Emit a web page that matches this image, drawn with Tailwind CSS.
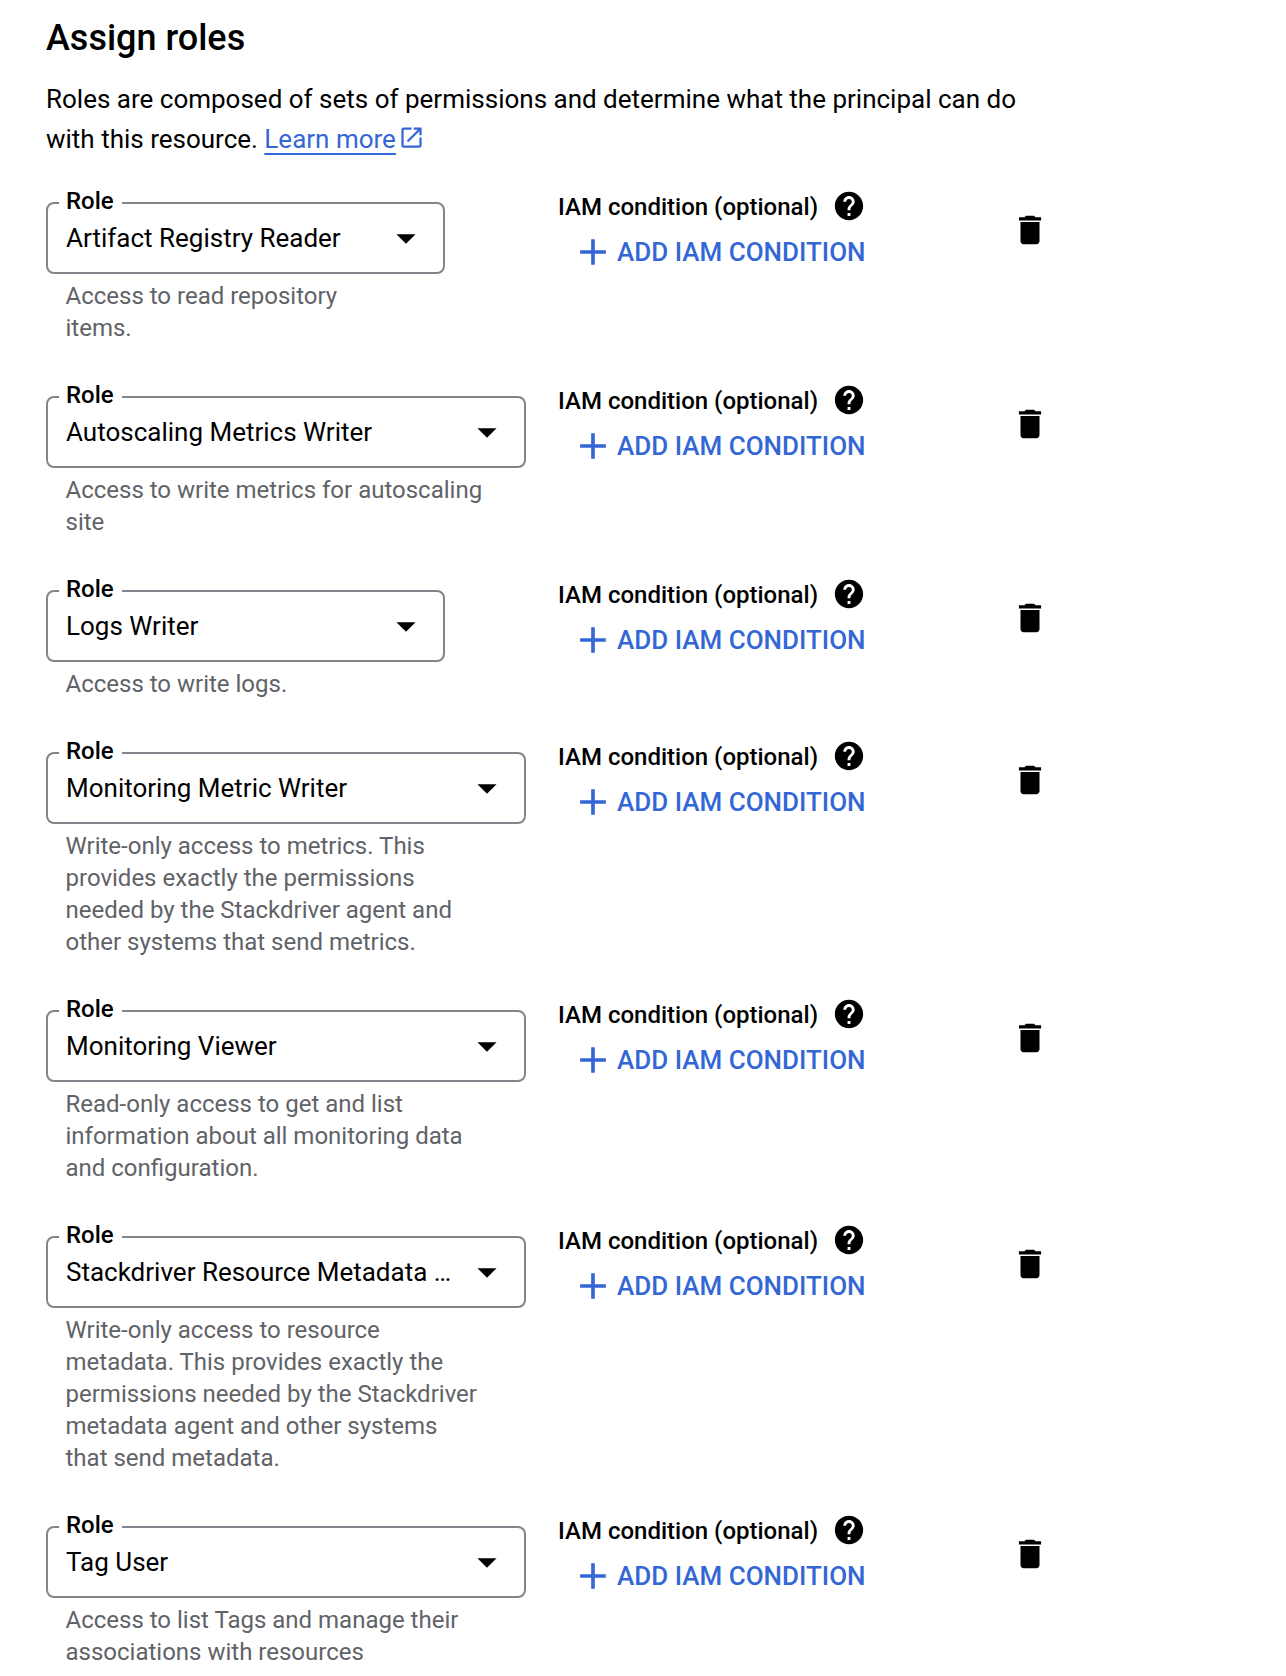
<!DOCTYPE html>
<html lang="en">
<head>
    <meta charset="UTF-8">
    <title>Assign roles</title>
    <script src="https://cdn.jsdelivr.net/npm/@tailwindcss/browser@4"></script>
</head>
<body class="bg-white font-[Roboto,sans-serif] text-black h-[1676px] overflow-hidden">
    <main class="pl-[46px] pt-[15px]">
        <h1 class="text-[36px] leading-[46px] font-medium">Assign roles</h1>
        <p class="text-[26px] leading-[40px] mt-[18px] w-[1000px]">
            Roles are composed of sets of permissions and determine what the principal can do<br>
            with this resource. <a class="text-[#3367d6] underline decoration-2 underline-offset-[5px]">Learn more</a><svg class="inline-block w-[27px] h-[27px] ml-[2px] align-[-3px]" viewBox="0 0 24 24" fill="#3367d6"><path d="M19 19H5V5h7V3H5c-1.11 0-2 .9-2 2v14c0 1.1.89 2 2 2h14c1.1 0 2-.9 2-2v-7h-2v7zM14 3v2h3.59l-9.83 9.83 1.41 1.41L19 6.41V10h2V3h-7z"/></svg>
        </p>

        <!-- Role rows -->
        <div class="mt-[43px] flex flex-col">

            <div class="flex pb-[52px]">
                <div class="w-[512px]">
                    <div class="relative w-[399px] h-[72px] border-2 border-[#80868b] rounded-[8px] flex items-center justify-between pl-[18px] pr-[14px] text-[26px]">
                        <span class="absolute left-[11px] top-[-17px] bg-white pl-[7px] pr-[8px] text-[24px] leading-[28px] font-medium">Role</span>
                        <span>Artifact Registry Reader</span>
                        <svg class="w-[46px] h-[46px]" viewBox="0 0 24 24"><path d="M7 10l5 5 5-5z"/></svg>
                    </div>
                    <p class="pl-[19.5px] mt-[6px] text-[24px] leading-[32px] text-[#5f6368]">Access to read repository<br>items.</p>
                </div>
                <div class="w-[453px]">
                    <div class="flex items-center mt-[-11px] text-[24px] leading-[32px] font-medium">IAM condition (optional)<svg class="w-[34px] h-[34px] ml-[14px] mt-[-2px]" viewBox="0 0 24 24"><path d="M12 2C6.48 2 2 6.48 2 12s4.48 10 10 10 10-4.48 10-10S17.52 2 12 2zm1 17h-2v-2h2v2zm2.07-7.75l-.9.92C13.45 12.9 13 13.5 13 15h-2v-.5c0-1.1.45-2.1 1.17-2.83l1.24-1.26c.37-.36.59-.86.59-1.41 0-1.1-.9-2-2-2s-2 .9-2 2H8c0-2.21 1.79-4 4-4s4 1.79 4 4c0 .88-.36 1.68-.93 2.25z"/></svg></div>
                    <div class="flex items-center mt-[7px] ml-[13px] text-[26px] leading-[36px] font-medium text-[#3367d6]"><svg class="w-[44px] h-[44px] mr-[2px]" viewBox="0 0 24 24" fill="#3367d6"><path d="M19 13h-6v6h-2v-6H5v-2h6V5h2v6h6v2z"/></svg>ADD IAM CONDITION</div>
                </div>
                <svg class="w-[38px] h-[38px] mt-[9px]" viewBox="0 0 24 24"><path d="M6 19c0 1.1.9 2 2 2h8c1.1 0 2-.9 2-2V7H6v12zM19 4h-3.5l-1-1h-5l-1 1H5v2h14V4z"/></svg>
            </div>

            <div class="flex pb-[52px]">
                <div class="w-[512px]">
                    <div class="relative w-[480px] h-[72px] border-2 border-[#80868b] rounded-[8px] flex items-center justify-between pl-[18px] pr-[14px] text-[26px]">
                        <span class="absolute left-[11px] top-[-17px] bg-white pl-[7px] pr-[8px] text-[24px] leading-[28px] font-medium">Role</span>
                        <span>Autoscaling Metrics Writer</span>
                        <svg class="w-[46px] h-[46px]" viewBox="0 0 24 24"><path d="M7 10l5 5 5-5z"/></svg>
                    </div>
                    <p class="pl-[19.5px] mt-[6px] text-[24px] leading-[32px] text-[#5f6368]">Access to write metrics for autoscaling<br>site</p>
                </div>
                <div class="w-[453px]">
                    <div class="flex items-center mt-[-11px] text-[24px] leading-[32px] font-medium">IAM condition (optional)<svg class="w-[34px] h-[34px] ml-[14px] mt-[-2px]" viewBox="0 0 24 24"><path d="M12 2C6.48 2 2 6.48 2 12s4.48 10 10 10 10-4.48 10-10S17.52 2 12 2zm1 17h-2v-2h2v2zm2.07-7.75l-.9.92C13.45 12.9 13 13.5 13 15h-2v-.5c0-1.1.45-2.1 1.17-2.83l1.24-1.26c.37-.36.59-.86.59-1.41 0-1.1-.9-2-2-2s-2 .9-2 2H8c0-2.21 1.79-4 4-4s4 1.79 4 4c0 .88-.36 1.68-.93 2.25z"/></svg></div>
                    <div class="flex items-center mt-[7px] ml-[13px] text-[26px] leading-[36px] font-medium text-[#3367d6]"><svg class="w-[44px] h-[44px] mr-[2px]" viewBox="0 0 24 24" fill="#3367d6"><path d="M19 13h-6v6h-2v-6H5v-2h6V5h2v6h6v2z"/></svg>ADD IAM CONDITION</div>
                </div>
                <svg class="w-[38px] h-[38px] mt-[9px]" viewBox="0 0 24 24"><path d="M6 19c0 1.1.9 2 2 2h8c1.1 0 2-.9 2-2V7H6v12zM19 4h-3.5l-1-1h-5l-1 1H5v2h14V4z"/></svg>
            </div>

            <div class="flex pb-[52px]">
                <div class="w-[512px]">
                    <div class="relative w-[399px] h-[72px] border-2 border-[#80868b] rounded-[8px] flex items-center justify-between pl-[18px] pr-[14px] text-[26px]">
                        <span class="absolute left-[11px] top-[-17px] bg-white pl-[7px] pr-[8px] text-[24px] leading-[28px] font-medium">Role</span>
                        <span>Logs Writer</span>
                        <svg class="w-[46px] h-[46px]" viewBox="0 0 24 24"><path d="M7 10l5 5 5-5z"/></svg>
                    </div>
                    <p class="pl-[19.5px] mt-[6px] text-[24px] leading-[32px] text-[#5f6368]">Access to write logs.</p>
                </div>
                <div class="w-[453px]">
                    <div class="flex items-center mt-[-11px] text-[24px] leading-[32px] font-medium">IAM condition (optional)<svg class="w-[34px] h-[34px] ml-[14px] mt-[-2px]" viewBox="0 0 24 24"><path d="M12 2C6.48 2 2 6.48 2 12s4.48 10 10 10 10-4.48 10-10S17.52 2 12 2zm1 17h-2v-2h2v2zm2.07-7.75l-.9.92C13.45 12.9 13 13.5 13 15h-2v-.5c0-1.1.45-2.1 1.17-2.83l1.24-1.26c.37-.36.59-.86.59-1.41 0-1.1-.9-2-2-2s-2 .9-2 2H8c0-2.21 1.79-4 4-4s4 1.79 4 4c0 .88-.36 1.68-.93 2.25z"/></svg></div>
                    <div class="flex items-center mt-[7px] ml-[13px] text-[26px] leading-[36px] font-medium text-[#3367d6]"><svg class="w-[44px] h-[44px] mr-[2px]" viewBox="0 0 24 24" fill="#3367d6"><path d="M19 13h-6v6h-2v-6H5v-2h6V5h2v6h6v2z"/></svg>ADD IAM CONDITION</div>
                </div>
                <svg class="w-[38px] h-[38px] mt-[9px]" viewBox="0 0 24 24"><path d="M6 19c0 1.1.9 2 2 2h8c1.1 0 2-.9 2-2V7H6v12zM19 4h-3.5l-1-1h-5l-1 1H5v2h14V4z"/></svg>
            </div>

            <div class="flex pb-[52px]">
                <div class="w-[512px]">
                    <div class="relative w-[480px] h-[72px] border-2 border-[#80868b] rounded-[8px] flex items-center justify-between pl-[18px] pr-[14px] text-[26px]">
                        <span class="absolute left-[11px] top-[-17px] bg-white pl-[7px] pr-[8px] text-[24px] leading-[28px] font-medium">Role</span>
                        <span>Monitoring Metric Writer</span>
                        <svg class="w-[46px] h-[46px]" viewBox="0 0 24 24"><path d="M7 10l5 5 5-5z"/></svg>
                    </div>
                    <p class="pl-[19.5px] mt-[6px] text-[24px] leading-[32px] text-[#5f6368]">Write-only access to metrics. This<br>provides exactly the permissions<br>needed by the Stackdriver agent and<br>other systems that send metrics.</p>
                </div>
                <div class="w-[453px]">
                    <div class="flex items-center mt-[-11px] text-[24px] leading-[32px] font-medium">IAM condition (optional)<svg class="w-[34px] h-[34px] ml-[14px] mt-[-2px]" viewBox="0 0 24 24"><path d="M12 2C6.48 2 2 6.48 2 12s4.48 10 10 10 10-4.48 10-10S17.52 2 12 2zm1 17h-2v-2h2v2zm2.07-7.75l-.9.92C13.45 12.9 13 13.5 13 15h-2v-.5c0-1.1.45-2.1 1.17-2.83l1.24-1.26c.37-.36.59-.86.59-1.41 0-1.1-.9-2-2-2s-2 .9-2 2H8c0-2.21 1.79-4 4-4s4 1.79 4 4c0 .88-.36 1.68-.93 2.25z"/></svg></div>
                    <div class="flex items-center mt-[7px] ml-[13px] text-[26px] leading-[36px] font-medium text-[#3367d6]"><svg class="w-[44px] h-[44px] mr-[2px]" viewBox="0 0 24 24" fill="#3367d6"><path d="M19 13h-6v6h-2v-6H5v-2h6V5h2v6h6v2z"/></svg>ADD IAM CONDITION</div>
                </div>
                <svg class="w-[38px] h-[38px] mt-[9px]" viewBox="0 0 24 24"><path d="M6 19c0 1.1.9 2 2 2h8c1.1 0 2-.9 2-2V7H6v12zM19 4h-3.5l-1-1h-5l-1 1H5v2h14V4z"/></svg>
            </div>

            <div class="flex pb-[52px]">
                <div class="w-[512px]">
                    <div class="relative w-[480px] h-[72px] border-2 border-[#80868b] rounded-[8px] flex items-center justify-between pl-[18px] pr-[14px] text-[26px]">
                        <span class="absolute left-[11px] top-[-17px] bg-white pl-[7px] pr-[8px] text-[24px] leading-[28px] font-medium">Role</span>
                        <span>Monitoring Viewer</span>
                        <svg class="w-[46px] h-[46px]" viewBox="0 0 24 24"><path d="M7 10l5 5 5-5z"/></svg>
                    </div>
                    <p class="pl-[19.5px] mt-[6px] text-[24px] leading-[32px] text-[#5f6368]">Read-only access to get and list<br>information about all monitoring data<br>and configuration.</p>
                </div>
                <div class="w-[453px]">
                    <div class="flex items-center mt-[-11px] text-[24px] leading-[32px] font-medium">IAM condition (optional)<svg class="w-[34px] h-[34px] ml-[14px] mt-[-2px]" viewBox="0 0 24 24"><path d="M12 2C6.48 2 2 6.48 2 12s4.48 10 10 10 10-4.48 10-10S17.52 2 12 2zm1 17h-2v-2h2v2zm2.07-7.75l-.9.92C13.45 12.9 13 13.5 13 15h-2v-.5c0-1.1.45-2.1 1.17-2.83l1.24-1.26c.37-.36.59-.86.59-1.41 0-1.1-.9-2-2-2s-2 .9-2 2H8c0-2.21 1.79-4 4-4s4 1.79 4 4c0 .88-.36 1.68-.93 2.25z"/></svg></div>
                    <div class="flex items-center mt-[7px] ml-[13px] text-[26px] leading-[36px] font-medium text-[#3367d6]"><svg class="w-[44px] h-[44px] mr-[2px]" viewBox="0 0 24 24" fill="#3367d6"><path d="M19 13h-6v6h-2v-6H5v-2h6V5h2v6h6v2z"/></svg>ADD IAM CONDITION</div>
                </div>
                <svg class="w-[38px] h-[38px] mt-[9px]" viewBox="0 0 24 24"><path d="M6 19c0 1.1.9 2 2 2h8c1.1 0 2-.9 2-2V7H6v12zM19 4h-3.5l-1-1h-5l-1 1H5v2h14V4z"/></svg>
            </div>

            <div class="flex pb-[52px]">
                <div class="w-[512px]">
                    <div class="relative w-[480px] h-[72px] border-2 border-[#80868b] rounded-[8px] flex items-center justify-between pl-[18px] pr-[14px] text-[26px]">
                        <span class="absolute left-[11px] top-[-17px] bg-white pl-[7px] pr-[8px] text-[24px] leading-[28px] font-medium">Role</span>
                        <span>Stackdriver Resource Metadata …</span>
                        <svg class="w-[46px] h-[46px]" viewBox="0 0 24 24"><path d="M7 10l5 5 5-5z"/></svg>
                    </div>
                    <p class="pl-[19.5px] mt-[6px] text-[24px] leading-[32px] text-[#5f6368]">Write-only access to resource<br>metadata. This provides exactly the<br>permissions needed by the Stackdriver<br>metadata agent and other systems<br>that send metadata.</p>
                </div>
                <div class="w-[453px]">
                    <div class="flex items-center mt-[-11px] text-[24px] leading-[32px] font-medium">IAM condition (optional)<svg class="w-[34px] h-[34px] ml-[14px] mt-[-2px]" viewBox="0 0 24 24"><path d="M12 2C6.48 2 2 6.48 2 12s4.48 10 10 10 10-4.48 10-10S17.52 2 12 2zm1 17h-2v-2h2v2zm2.07-7.75l-.9.92C13.45 12.9 13 13.5 13 15h-2v-.5c0-1.1.45-2.1 1.17-2.83l1.24-1.26c.37-.36.59-.86.59-1.41 0-1.1-.9-2-2-2s-2 .9-2 2H8c0-2.21 1.79-4 4-4s4 1.79 4 4c0 .88-.36 1.68-.93 2.25z"/></svg></div>
                    <div class="flex items-center mt-[7px] ml-[13px] text-[26px] leading-[36px] font-medium text-[#3367d6]"><svg class="w-[44px] h-[44px] mr-[2px]" viewBox="0 0 24 24" fill="#3367d6"><path d="M19 13h-6v6h-2v-6H5v-2h6V5h2v6h6v2z"/></svg>ADD IAM CONDITION</div>
                </div>
                <svg class="w-[38px] h-[38px] mt-[9px]" viewBox="0 0 24 24"><path d="M6 19c0 1.1.9 2 2 2h8c1.1 0 2-.9 2-2V7H6v12zM19 4h-3.5l-1-1h-5l-1 1H5v2h14V4z"/></svg>
            </div>

            <div class="flex pb-[52px]">
                <div class="w-[512px]">
                    <div class="relative w-[480px] h-[72px] border-2 border-[#80868b] rounded-[8px] flex items-center justify-between pl-[18px] pr-[14px] text-[26px]">
                        <span class="absolute left-[11px] top-[-17px] bg-white pl-[7px] pr-[8px] text-[24px] leading-[28px] font-medium">Role</span>
                        <span>Tag User</span>
                        <svg class="w-[46px] h-[46px]" viewBox="0 0 24 24"><path d="M7 10l5 5 5-5z"/></svg>
                    </div>
                    <p class="pl-[19.5px] mt-[6px] text-[24px] leading-[32px] text-[#5f6368]">Access to list Tags and manage their<br>associations with resources</p>
                </div>
                <div class="w-[453px]">
                    <div class="flex items-center mt-[-11px] text-[24px] leading-[32px] font-medium">IAM condition (optional)<svg class="w-[34px] h-[34px] ml-[14px] mt-[-2px]" viewBox="0 0 24 24"><path d="M12 2C6.48 2 2 6.48 2 12s4.48 10 10 10 10-4.48 10-10S17.52 2 12 2zm1 17h-2v-2h2v2zm2.07-7.75l-.9.92C13.45 12.9 13 13.5 13 15h-2v-.5c0-1.1.45-2.1 1.17-2.83l1.24-1.26c.37-.36.59-.86.59-1.41 0-1.1-.9-2-2-2s-2 .9-2 2H8c0-2.21 1.79-4 4-4s4 1.79 4 4c0 .88-.36 1.68-.93 2.25z"/></svg></div>
                    <div class="flex items-center mt-[7px] ml-[13px] text-[26px] leading-[36px] font-medium text-[#3367d6]"><svg class="w-[44px] h-[44px] mr-[2px]" viewBox="0 0 24 24" fill="#3367d6"><path d="M19 13h-6v6h-2v-6H5v-2h6V5h2v6h6v2z"/></svg>ADD IAM CONDITION</div>
                </div>
                <svg class="w-[38px] h-[38px] mt-[9px]" viewBox="0 0 24 24"><path d="M6 19c0 1.1.9 2 2 2h8c1.1 0 2-.9 2-2V7H6v12zM19 4h-3.5l-1-1h-5l-1 1H5v2h14V4z"/></svg>
            </div>

        </div>
    </main>
</body>
</html>
